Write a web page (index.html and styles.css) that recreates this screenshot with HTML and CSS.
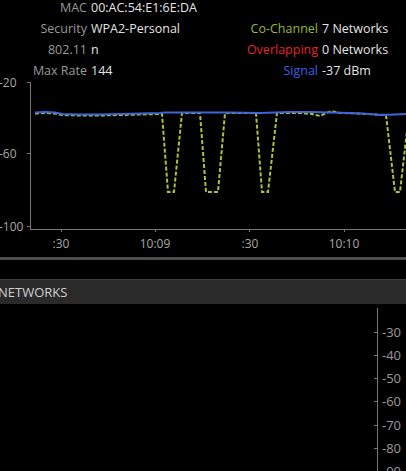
FILE: index.html
```html
<!DOCTYPE html>
<html lang="en">
<head>
  <meta charset="UTF-8">
  <title>Network details</title>
  <link rel="stylesheet" href="styles.css">
</head>
<body>

<div class="info">
  <dl class="meta">
    <dt>MAC</dt><dd>00:AC:54:E1:6E:DA</dd>
    <dt>Security</dt><dd>WPA2-Personal</dd>
    <dt>802.11</dt><dd>n</dd>
    <dt>Max Rate</dt><dd>144</dd>
  </dl>
  <dl class="meta meta-right">
    <dt class="co">Co-Channel</dt><dd>7 Networks</dd>
    <dt class="overlap">Overlapping</dt><dd>0 Networks</dd>
    <dt class="signal">Signal</dt><dd>-37 dBm</dd>
  </dl>
</div>

<!-- signal history, -20..-100 dBm at 1.8px per dBm -->
<svg class="chart" width="406" height="177" viewBox="0 0 406 177">
  <g class="axis">
    <line x1="30.5" y1="2" x2="30.5" y2="149.5"/>
    <line x1="30" y1="149.5" x2="406" y2="149.5"/>
    <line x1="27" y1="2.5" x2="30" y2="2.5"/>
    <line x1="27" y1="73.5" x2="30" y2="73.5"/>
    <line x1="27" y1="146.5" x2="30" y2="146.5"/>
    <line x1="61.5" y1="149" x2="61.5" y2="152"/>
    <line x1="155.5" y1="149" x2="155.5" y2="152"/>
    <line x1="249.5" y1="149" x2="249.5" y2="152"/>
    <line x1="344.5" y1="149" x2="344.5" y2="152"/>
  </g>
  <g class="tick-text">
    <text x="-1" y="6.5">-20</text>
    <text x="-1" y="78">-60</text>
    <text x="-1" y="151">-100</text>
    <text x="61" y="168" text-anchor="middle">:30</text>
    <text x="155" y="168" text-anchor="middle">10:09</text>
    <text x="250" y="168" text-anchor="middle">:30</text>
    <text x="344" y="168" text-anchor="middle">10:10</text>
  </g>
  <polyline class="co-line" points="35,33.5 45,33 55,33.5 62,35 80,35.5 100,35.5 120,35 140,34.5 158,34 162,34 168,112 174,112 182,33 200,33 206,112 218,112 225,33 256,33 262,112 268,112 277,33 300,33 312,34 320,36 326,33 332,31 340,33 360,33.5 375,34.5 386,35 395,112 400,112 409,33"/>
  <polyline class="sig-line" points="35,32.5 45,32 55,32.5 62,34 80,34.5 100,34.5 120,34 140,33.5 160,33 165,32.5 200,32.5 230,32.5 260,33 290,32 310,32 330,32.5 350,33 370,34 380,35 395,34.5 406,34"/>
</svg>

<div class="rule"></div>

<div class="section-head">NETWORKS</div>

<svg class="scale" width="406" height="167" viewBox="0 0 406 167">
  <g class="axis">
    <line x1="377.5" y1="4" x2="377.5" y2="167"/>
    <line x1="374" y1="28.5" x2="377" y2="28.5"/>
    <line x1="374" y1="51.5" x2="377" y2="51.5"/>
    <line x1="374" y1="74.5" x2="377" y2="74.5"/>
    <line x1="374" y1="97.5" x2="377" y2="97.5"/>
    <line x1="374" y1="121.5" x2="377" y2="121.5"/>
    <line x1="374" y1="144.5" x2="377" y2="144.5"/>
  </g>
  <g class="tick-text scale-text">
    <text x="382" y="33">-30</text>
    <text x="382" y="56">-40</text>
    <text x="382" y="79">-50</text>
    <text x="382" y="102">-60</text>
    <text x="382" y="126">-70</text>
    <text x="382" y="149">-80</text>
    <text x="382" y="172">-90</text>
  </g>
</svg>

</body>
</html>
```

FILE: styles.css
```css
body {
  margin: 0;
  width: 406px;
  height: 471px;
  overflow: hidden;
  background: #000;
  font-family: "Open Sans", "Noto Sans", sans-serif;
}

.info {
  display: flex;
  height: 80px;
}

.meta {
  display: grid;
  grid-template-columns: 87px auto;
  grid-auto-rows: 21px;
  column-gap: 4px;
  align-content: start;
  margin: -3px 0 0;
  font-size: 12.5px;
  line-height: 21px;
  flex: none;
  width: 230px;
}

.meta dt {
  text-align: right;
  color: #9a9a9a;
  white-space: nowrap;
}

.meta dd {
  margin: 0;
  color: #e4e4e4;
  white-space: nowrap;
}

.meta-right {
  width: auto;
  padding-top: 21px;
  grid-template-columns: 88px auto;
}

.meta .co {
  color: #8fbc3a;
}

.meta .overlap {
  color: #e1252b;
}

.meta .signal {
  color: #3d5fe6;
}

.chart,
.scale {
  display: block;
  overflow: visible;
}

.axis line {
  stroke: #777;
  stroke-width: 1;
}

.tick-text {
  fill: #a8a8a8;
  font-size: 12px;
  font-family: "Open Sans", "Noto Sans", sans-serif;
}

.scale-text {
  font-size: 13px;
  fill: #9a9a9a;
}

.co-line {
  fill: none;
  stroke: #a9c63a;
  stroke-width: 2;
  stroke-dasharray: 4 2;
}

.sig-line {
  fill: none;
  stroke: #3f63dc;
  stroke-width: 2;
}

.rule {
  height: 3px;
  background: #4d4d4d;
}

.section-head {
  margin-top: 19px;
  height: 25px;
  box-sizing: border-box;
  background: #2a2a2a;
  border-top: 1px solid #3d3d3d;
  color: #d0d0d0;
  font-size: 13px;
  line-height: 24px;
  text-indent: -2px;
}
```
